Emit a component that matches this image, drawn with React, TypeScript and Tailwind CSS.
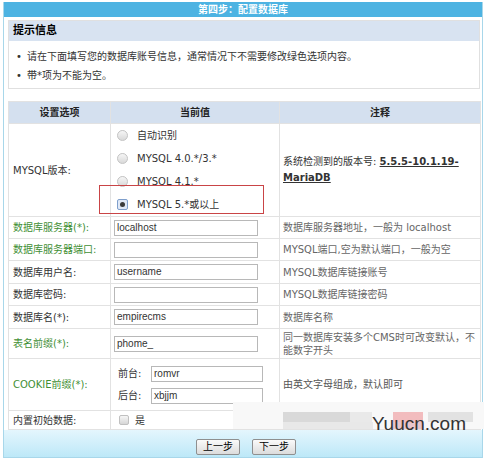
const labelGreen = 'text-[#3f8f35]';

function Radio({ checked }: { checked?: boolean }) {
  if (checked) {
    return (
      <span className="w-[11px] h-[11px] rounded-[2px] border border-[#7f9fcc] bg-[#dfe8f6] flex items-center justify-center shrink-0">
        <span className="w-[5px] h-[5px] rounded-full bg-[#3a3a3a]" />
      </span>
    );
  }
  return (
    <span className="w-[11px] h-[11px] rounded-full border border-[#c4c4c4] bg-gradient-to-b from-[#f6f6f6] to-[#d9d9d9] shrink-0" />
  );
}

function TextInput({ value, width = 'w-[144px]' }: { value?: string; width?: string }) {
  return (
    <div
      className={`${width} h-[16px] border border-[#b8b8b8] bg-white pl-[2px] text-[10px] leading-[14px] text-[#333] font-['Liberation_Sans',sans-serif]`}
    >
      {value}
    </div>
  );
}

const rows = [
  { label: '数据库服务器(*):', green: true, value: 'localhost', note: '数据库服务器地址，一般为 localhost', h: 'h-[22px]' },
  { label: '数据库服务器端口:', green: true, value: '', note: 'MYSQL端口,空为默认端口，一般为空', h: 'h-[22px]' },
  { label: '数据库用户名:', green: false, value: 'username', note: 'MYSQL数据库链接账号', h: 'h-[23px]' },
  { label: '数据库密码:', green: false, value: '', note: 'MYSQL数据库链接密码', h: 'h-[22px]' },
  { label: '数据库名(*):', green: false, value: 'empirecms', note: '数据库名称', h: 'h-[23px]' },
  { label: '表名前缀(*):', green: true, value: 'phome_', note: '同一数据库安装多个CMS时可改变默认，不能数字开头', h: 'h-[30px]' },
];

export default function App() {
  const cell = 'border border-[#e2e2e2]';
  return (
    <div className="relative w-[484px] h-[458px] bg-white overflow-hidden text-[10px] text-[#333] font-['DejaVu_Sans','Noto_Sans_CJK_SC',sans-serif]">
      <div className="ml-[3px] mt-[2px] w-[480px] h-[456px] border-x border-b border-[#a8d7ea] flex flex-col">
        <div className="h-[15px] bg-[#4db3e2] text-white font-bold text-center leading-[15px]">
          第四步：配置数据库
        </div>

        <div className="pl-[4px] pr-[2px]">
          {/* 提示信息 */}
          <div className="mt-[3px] border border-[#e0e0e0]">
            <div className="h-[20px] bg-[#d8e3f1] pl-[4px] text-[11px] font-bold text-black leading-[20px]">
              提示信息
            </div>
            <ul className="pt-[6px] pb-[3px] leading-[19px]">
              <li className="flex pl-[7px]">
                <span className="w-[11px]">•</span>
                <span>请在下面填写您的数据库账号信息，通常情况下不需要修改绿色选项内容。</span>
              </li>
              <li className="flex pl-[7px]">
                <span className="w-[11px]">•</span>
                <span>带*项为不能为空。</span>
              </li>
            </ul>
          </div>

          <table className="mt-[12px] w-[472px] table-fixed border-collapse">
            <colgroup>
              <col className="w-[102px]" />
              <col className="w-[169px]" />
              <col className="w-[201px]" />
            </colgroup>
            <thead>
              <tr className="h-[22px] bg-[#d4e0ef] font-bold text-[#222]">
                <th className={cell}>设置选项</th>
                <th className={cell}>当前值</th>
                <th className={cell}>注释</th>
              </tr>
            </thead>
            <tbody>
              <tr className="h-[92px]">
                <td className={`${cell} pl-[4px]`}>
                  MYSQL版本:
                </td>
                <td className={`${cell} pl-[6px]`}>
                  <div className="flex flex-col text-[10px]">
                    {['自动识别', 'MYSQL 4.0.*/3.*', 'MYSQL 4.1.*', 'MYSQL 5.*或以上'].map((t, i) => (
                      <div key={t} className="h-[23px] flex items-center gap-[9px]">
                        <Radio checked={i === 3} />
                        <span>{t}</span>
                      </div>
                    ))}
                  </div>
                </td>
                <td className={`${cell} pl-[3px] pr-[6px] leading-[16px]`}>
                  <div className="whitespace-nowrap">
                    系统检测到的版本号: <span className="font-bold underline">5.5.5-10.1.19-</span>
                  </div>
                  <div className="font-bold underline">MariaDB</div>
                </td>
              </tr>

              {rows.map((r) => (
                <tr key={r.label} className={r.h}>
                  <td className={`${cell} pl-[4px] ${r.green ? labelGreen : ''}`}>{r.label}</td>
                  <td className={`${cell} pl-[3px]`}>
                    <TextInput value={r.value} />
                  </td>
                  <td className={`${cell} pl-[3px] pr-[4px] text-[#666] leading-[13px]`}>{r.note}</td>
                </tr>
              ))}

              <tr className="h-[52px]">
                <td className={`${cell} pl-[4px] ${labelGreen}`}>COOKIE前缀(*):</td>
                <td className={`${cell} pl-[7px]`}>
                  <div className="flex flex-col gap-[6px]">
                    <div className="flex items-center">
                      <span className="w-[33px]">前台:</span>
                      <TextInput value="romvr" width="w-[112px]" />
                    </div>
                    <div className="flex items-center">
                      <span className="w-[33px]">后台:</span>
                      <TextInput value="xbjjm" width="w-[112px]" />
                    </div>
                  </div>
                </td>
                <td className={`${cell} pl-[3px] text-[#555]`}>由英文字母组成，默认即可</td>
              </tr>

              <tr className="h-[19px]">
                <td className={`${cell} pl-[4px]`}>内置初始数据:</td>
                <td className={`${cell} pl-[8px]`}>
                  <div className="flex items-center gap-[6px]">
                    <span className="w-[10px] h-[10px] rounded-[2px] border border-[#c0c0c0] bg-gradient-to-b from-[#f6f6f6] to-[#d6d6d6]" />
                    <span>是</span>
                  </div>
                </td>
                <td className={cell}></td>
              </tr>
            </tbody>
          </table>
        </div>

        <div className="flex-1 bg-gradient-to-b from-[#e4f6fd] to-[#bde8f8] flex justify-center gap-[12px] pt-[9px] pl-[6px]">
          {['上一步', '下一步'].map((t) => (
            <button
              key={t}
              type="button"
              className="w-[44px] h-[16px] border border-[#8f8f8f] rounded-[2px] bg-gradient-to-b from-[#fafafa] to-[#dcdcdc] text-[10px] leading-[14px] text-black"
            >
              {t}
            </button>
          ))}
        </div>
      </div>

      {/* annotation box around the selected version */}
      <div className="absolute left-[99px] top-[185px] w-[165px] h-[29px] shadow-[inset_0_0_0_1px_#c94446] pointer-events-none" />

      {/* watermark mosaic */}
      <div className="absolute left-[233px] top-[402px] w-[251px] h-[27px] bg-[#f8f8f8] pointer-events-none">
        <div className="absolute left-[50px] top-[10px] w-[67px] h-[10px] bg-[#d9d9d9]" />
        <div className="absolute left-[117px] top-[10px] w-[22px] h-[10px] bg-[#e9e9e9]" />
        <div className="absolute left-[160px] top-[10px] w-[30px] h-[10px] bg-[#f2bcbe]" />
        <div className="absolute left-[195px] top-[10px] w-[45px] h-[10px] bg-[#e2e2e2]" />
        <div className="absolute left-[50px] top-[20px] w-[90px] h-[7px] bg-[#e8e8e8]" />
        <div className="absolute left-[160px] top-[20px] w-[30px] h-[7px] bg-[#e8c6cc]" />
      </div>
      <div className="absolute left-[372px] top-[413px] text-[19px] leading-[22px] text-[#333] font-['Liberation_Sans',sans-serif] pointer-events-none">
        Yuucn.com
      </div>
    </div>
  );
}
